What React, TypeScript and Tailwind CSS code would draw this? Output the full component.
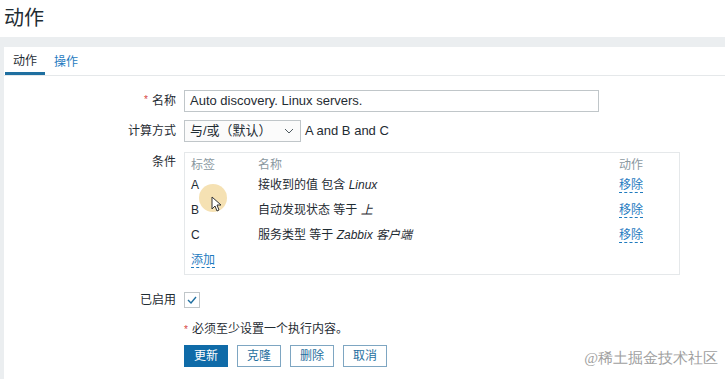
import React from "react";

const font = { fontFamily: '"Liberation Sans", "Noto Sans CJK SC", sans-serif' };

function Link({ children }: { children: React.ReactNode }) {
  return (
    <span className="text-[#1f7bbf] border-b border-dashed border-[#1f7bbf] leading-[14px]">{children}</span>
  );
}

export default function App() {
  const rows = [
    { tag: "A", pre: "接收到的值 包含 ", it: "Linux" },
    { tag: "B", pre: "自动发现状态 等于 ", it: "上" },
    { tag: "C", pre: "服务类型 等于 ", it: "Zabbix 客户端" },
  ];
  return (
    <div className="w-[725px] h-[379px] overflow-hidden bg-[#ebeef0] relative text-[12px] text-[#1f2c33]" style={font}>
      <div className="h-[37px] bg-white pl-[4px] pt-[4px] text-[20px] leading-[28px] text-[#1f2c33]">动作</div>
      <div className="pt-[10px] pl-[4px] h-[342px]">
        <div className="bg-white h-full">
          <div className="flex h-[29px] border-b border-[#e5e8ea]">
            <div className="w-[40px] ml-[1px] flex flex-col">
              <div className="flex-1 flex items-center justify-center pt-[2px]">动作</div>
              <div className="h-[3px] bg-[#1f6fa0]" />
            </div>
            <div className="ml-[9px] flex items-center pt-[2px] text-[#1f7bbf]">操作</div>
          </div>
          <div className="pt-[14px] flex flex-col">
            <div className="flex items-center h-[22px]">
              <div className="w-[172px] text-right pr-0">
                <span className="text-[#d64541] mr-[4px] text-[10px] align-top">*</span>名称
              </div>
              <div className="ml-[8px] w-[415px] h-[22px] border border-[#c0c6c9] flex items-center pl-[5px] text-[13px]">
                Auto discovery. Linux servers.
              </div>
            </div>
            <div className="flex items-center h-[22px] mt-[8px]">
              <div className="w-[172px] text-right">计算方式</div>
              <div className="ml-[8px] w-[117px] h-[22px] border border-[#c0c6c9] bg-[#fbfbfb] flex items-center justify-between pl-[5px] pr-[6px] text-[13px]">
                <span>与/或（默认）</span>
                <svg width="10" height="6" viewBox="0 0 10 6"><path d="M1 1l4 4 4-4" fill="none" stroke="#4f5a60" strokeWidth="1" /></svg>
              </div>
              <div className="ml-[4px] text-[13px]">A and B and C</div>
            </div>
            <div className="flex mt-[10px]">
              <div className="w-[172px] text-right pt-[1px]">条件</div>
              <div className="ml-[8px] w-[496px] h-[123px] border border-[#e5e8ea] pl-[6px] pt-[4px]">
                <div className="flex h-[15px] items-center text-[#8a989f]">
                  <div className="w-[67px]">标签</div>
                  <div className="w-[361px]">名称</div>
                  <div>动作</div>
                </div>
                {rows.map((r) => (
                  <div key={r.tag} className="flex h-[25px] items-center">
                    <div className="w-[67px]">{r.tag}</div>
                    <div className="w-[361px]">
                      {r.pre}
                      <i>{r.it}</i>
                    </div>
                    <div><Link>移除</Link></div>
                  </div>
                ))}
                <div className="flex h-[22px] items-center mt-[2px]">
                  <Link>添加</Link>
                </div>
              </div>
            </div>
            <div className="flex items-center mt-[16px] h-[17px]">
              <div className="w-[172px] text-right">已启用</div>
              <div className="ml-[8px] w-[16px] h-[16px] border border-[#c0c6c9] flex items-center justify-center">
                <svg width="10" height="8" viewBox="0 0 10 8"><path d="M1 4l3 3 5-6" fill="none" stroke="#1f6fa0" strokeWidth="1.4" /></svg>
              </div>
            </div>
            <div className="ml-[180px] mt-[13px] h-[16px] flex items-center">
              <span className="text-[#d64541] mr-[4px] text-[10px] align-top">*</span>必须至少设置一个执行内容。
            </div>
            <div className="ml-[180px] mt-[8px] flex gap-[9px]">
              <div className="w-[44px] h-[22px] bg-[#0f6ba8] border border-[#0f6ba8] text-white flex items-center justify-center">更新</div>
              <div className="w-[44px] h-[22px] border border-[#7ea6c2] text-[#1f6fa0] flex items-center justify-center">克隆</div>
              <div className="w-[44px] h-[22px] border border-[#7ea6c2] text-[#1f6fa0] flex items-center justify-center">删除</div>
              <div className="w-[44px] h-[22px] border border-[#7ea6c2] text-[#1f6fa0] flex items-center justify-center">取消</div>
            </div>
          </div>
        </div>
      </div>
      <div className="absolute left-[199px] top-[184px] w-[28px] h-[28px] rounded-full bg-[#f3d9a0] opacity-80" />
      <svg className="absolute left-[211px] top-[196px]" width="12" height="16" viewBox="0 0 12 16">
        <path d="M1 1v12l3-3 2 5 2-1-2-5h4z" fill="white" stroke="#333" strokeWidth="1" />
      </svg>
      <div className="absolute right-[7px] bottom-[10px] text-[15px] text-[#a0a0a0]" style={{ fontFamily: 'serif' }}>@稀土掘金技术社区</div>
    </div>
  );
}
